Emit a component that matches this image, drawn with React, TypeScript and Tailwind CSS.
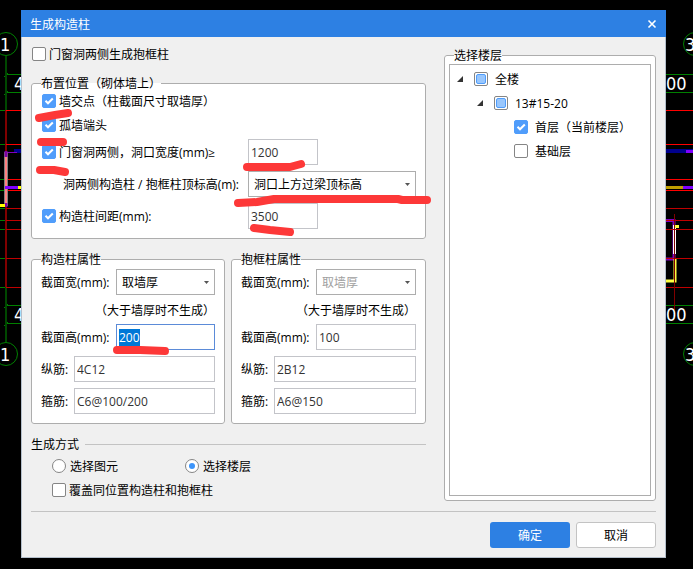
import React, { useEffect, useRef } from 'react';

const legendClass = 'h-[18px] leading-[20px]';
const groupClass = 'min-w-0 flex flex-col rounded-[3px] border border-[#adadad] bg-white';

type CheckProps = {
  label: string;
  checked?: boolean;
  partial?: boolean;
  wide?: boolean;
};

const Check: React.FC<CheckProps> = ({ label, checked, partial, wide }) => (
  <label className={`flex items-center h-[18px] ${wide ? 'gap-[7px]' : 'gap-[3px]'}`}>
    <span className="relative block size-[14px] shrink-0">
      <input
        type="checkbox"
        defaultChecked={checked}
        className="peer block size-[14px] appearance-none rounded-[2px] border border-[#858585] bg-white checked:border-[#509dfb] checked:bg-[#509dfb]"
      />
      <svg
        viewBox="0 0 14 14"
        className="pointer-events-none absolute inset-0 hidden size-[14px] peer-checked:block"
      >
        <path d="M3.5 6.8 L6 9.3 L10.8 4.5" fill="none" stroke="#fff" strokeWidth="2" />
      </svg>
      {partial && (
        <span className="pointer-events-none absolute inset-[2px] rounded-[2px] border border-[#509dfb] bg-[#99c7fd]" />
      )}
    </span>
    <span className="pt-[2px] leading-[18px] whitespace-nowrap">{label}</span>
  </label>
);

const Radio: React.FC<{ label: string; checked?: boolean }> = ({ label, checked }) => (
  <label className="flex h-[18px] w-[133px] items-center gap-1">
    <span className="relative block size-[14px] shrink-0">
      <input
        type="radio"
        name="mode"
        defaultChecked={checked}
        className="peer block size-[14px] appearance-none rounded-full border border-[#858585] bg-white"
      />
      <span className="pointer-events-none absolute inset-1 hidden rounded-full bg-[#3c94fa] peer-checked:block" />
    </span>
    <span className="pt-[2px] leading-[18px]">{label}</span>
  </label>
);

type TextBoxProps = {
  id: string;
  value: string;
  className: string;
  selected?: boolean;
};

const TextBox: React.FC<TextBoxProps> = ({ id, value, className, selected }) => {
  const ref = useRef<HTMLInputElement>(null);

  useEffect(() => {
    if (selected && ref.current) {
      ref.current.focus();
      ref.current.select();
    }
  }, [selected]);

  return (
    <input
      id={id}
      ref={ref}
      type="text"
      aria-label={id}
      defaultValue={value}
      className={`block h-[26px] min-w-0 border border-[#c3c4c9] bg-white px-[2px] leading-[18px] text-[#333] outline-none selection:bg-[#0078d7] selection:text-white focus:border-[#5b8bd8] ${className}`}
    />
  );
};

type ComboProps = {
  id: string;
  value: string;
  disabled?: boolean;
};

const Combo: React.FC<ComboProps> = ({ id, value, disabled }) => (
  <div className="relative min-w-0 flex-1">
    <select
      id={id}
      disabled={disabled}
      className="block h-[26px] w-full appearance-none border border-[#adadad] bg-white px-[5px] pt-[2px] leading-[18px] text-black opacity-100 outline-none disabled:text-[#a0a0a0]"
    >
      <option>{value}</option>
    </select>
    <svg viewBox="0 0 5 3" className="pointer-events-none absolute right-[6px] top-[12px] h-[3px] w-[5px]">
      <path d="M0 0 H5 L2.5 3 Z" fill="#555" />
    </svg>
  </div>
);

type ColumnGroupProps = {
  title: string;
  prefix: string;
  height: string;
  main: string;
  stirrup: string;
  disabled?: boolean;
  selected?: boolean;
};

const ColumnGroup: React.FC<ColumnGroupProps> = ({ title, prefix, height, main, stirrup, disabled, selected }) => (
  <fieldset className={`${groupClass} px-[9px] pt-px pb-[9px]`}>
    <legend className={legendClass}>{title}</legend>
    <div className="flex items-center">
      <label htmlFor={`${prefix}-width`} className="w-[75px] shrink-0 pt-[2px]">截面宽(mm):</label>
      <Combo id={`${prefix}-width`} value="取墙厚" disabled={disabled} />
    </div>
    <p className="flex h-[29px] items-center justify-end pt-[2px] whitespace-nowrap">（大于墙厚时不生成）</p>
    <div className="flex flex-col gap-[6px]">
      <div className="flex items-center">
        <label htmlFor={`${prefix}-height`} className="w-[75px] shrink-0 pt-[2px]">截面高(mm):</label>
        <TextBox id={`${prefix}-height`} value={height} selected={selected} className="flex-1" />
      </div>
      <div className="flex items-center">
        <label htmlFor={`${prefix}-main`} className="w-[33px] shrink-0 pt-[2px]">纵筋:</label>
        <TextBox id={`${prefix}-main`} value={main} className="flex-1" />
      </div>
      <div className="flex items-center">
        <label htmlFor={`${prefix}-stirrup`} className="w-[33px] shrink-0 pt-[2px]">箍筋:</label>
        <TextBox id={`${prefix}-stirrup`} value={stirrup} className="flex-1" />
      </div>
    </div>
  </fieldset>
);

const Expander: React.FC = () => (
  <button type="button" aria-label="展开" className="mr-[11px] block size-[6px] shrink-0">
    <svg viewBox="0 0 6 6" className="block size-[6px]">
      <path d="M6 0 V6 H0 Z" fill="#333" />
    </svg>
  </button>
);

const gridLines = [110, 144, 179, 190, 208, 220, 229, 258, 287];

const DrawingLeft: React.FC = () => (
  <svg viewBox="0 0 21 569" className="absolute left-0 top-0 h-[569px] w-[21px]">
    <g fill="none" stroke="#008000">
      <circle cx="6" cy="44" r="11.5" />
      <circle cx="6" cy="354" r="11.5" />
      <path d="M5 74.5 H21 M5 92.5 H21 M5 305.5 H21 M5 323.5 H21 M4 77 L8 73 M4 95 L8 91 M4 308 L8 304 M4 326 L8 322" />
      {gridLines.map((y) => (
        <path key={y} d={`M0 ${y + 0.5} H5`} />
      ))}
    </g>
    <path d="M6 56 V110 M6 287 V342" stroke="#004800" strokeWidth="2" />
    <path d="M6 110 V287" stroke="#800000" strokeWidth="2" />
    {gridLines.map((y) => (
      <path key={y} d={`M6 ${y + 0.5} H21`} stroke={y < 200 ? '#ff0000' : '#c00000'} />
    ))}
    <path d="M14 151 H21" stroke="#00008c" strokeWidth="4" />
    <path d="M5 152.5 H17" stroke="#8000c0" />
    <path d="M6 152 V206" stroke="#808080" strokeWidth="4" />
    <path d="M6 157 V203" stroke="#ff8080" strokeWidth="2" />
    <path d="M6 151 V157 M6 203 V207" stroke="#8000a0" strokeWidth="3" />
    <path d="M5 187.5 H18" stroke="#8000ff" strokeWidth="3" />
    <path d="M18 187.5 H21 M0 205.5 H5" stroke="#ffff00" strokeWidth="3" />
    <g fill="#fff" fontFamily="DejaVu Sans Condensed, DejaVu Sans" fontSize="18">
      <text x="0" y="51">1</text>
      <text x="0" y="361">1</text>
      <text x="14" y="90">4</text>
      <text x="14" y="321">4</text>
    </g>
  </svg>
);

const DrawingRight: React.FC = () => (
  <svg viewBox="666 0 27 569" className="absolute right-0 top-0 h-[569px] w-[27px]">
    <g fill="none" stroke="#008000">
      <circle cx="695" cy="44" r="11.5" />
      <circle cx="695" cy="354" r="11.5" />
      <path d="M666 74.5 H693 M666 92.5 H693 M666 305.5 H693 M666 323.5 H693" />
    </g>
    <path d="M666 151 H693" stroke="#00008c" strokeWidth="4" />
    <path d="M686 151.5 H693" stroke="#8000ff" strokeWidth="3" />
    <path d="M666 187.5 H683" stroke="#c0a000" strokeWidth="3" />
    <path d="M683 187.5 H693" stroke="#8000ff" strokeWidth="3" />
    <path d="M666 220.5 H674 V259 H666" fill="none" stroke="#8000c0" strokeWidth="3" />
    <path d="M674.5 225 V254" stroke="#fff" strokeWidth="3" />
    <path d="M675 259 V281 H666 M675 226.5 H679" fill="none" stroke="#ffff40" strokeWidth="3" />
    {gridLines.map((y) => (
      <path key={y} d={`M666 ${y + 0.5} H693`} stroke={y < 200 ? '#ff0000' : '#c00000'} />
    ))}
    <path d="M674.5 214 V310" stroke="#800000" />
    <g fill="#fff" fontFamily="DejaVu Sans Condensed, DejaVu Sans" fontSize="18">
      <text x="666" y="90">00</text>
      <text x="666" y="321">00</text>
      <text x="685" y="51">3</text>
      <text x="685" y="361">3</text>
    </g>
  </svg>
);

// hand-drawn red marks over the fields
const Marks: React.FC = () => (
  <svg
    viewBox="0 0 693 569"
    className="pointer-events-none absolute left-0 top-0 h-[569px] w-[693px]"
    fill="none"
    stroke="#fd3838"
    strokeWidth="8"
    strokeLinecap="round"
    strokeLinejoin="round"
  >
    <path d="M39 118 Q53 115 68 113" />
    <path d="M41 142 H63" />
    <path d="M40 170 L54 170 L65 172" />
    <path d="M247 167 H290 L301 164" />
    <path d="M238 203 L257 202 L274 199 H398 L402 200 H427" />
    <path d="M254 228 L270 230 L290 232" />
    <path d="M117 350 H140 L165 351" />
  </svg>
);

const App: React.FC = () => {
  return (
    <div className="relative min-h-screen overflow-hidden bg-black pt-[10px] pr-[27px] pb-[11px] pl-[21px] font-['Open_Sans','Noto_Sans_CJK_SC',sans-serif] text-xs text-black">
      <DrawingLeft />
      <DrawingRight />

      <main className="relative bg-[#f0f0f0]">
        <header className="flex h-[27px] items-center justify-between bg-[#2d80e3] pr-[9px] pl-[9px] text-white">
          <h1 className="pt-[2px]">生成构造柱</h1>
          <button type="button" aria-label="关闭" className="block size-[10px]">
            <svg viewBox="0 0 10 10" className="block size-[10px]">
              <path d="M1.5 1.5 L8.5 8.5 M8.5 1.5 L1.5 8.5" stroke="#fff" strokeWidth="1.6" />
            </svg>
          </button>
        </header>

        <form className="border border-t-0 border-[#b4bfcb] px-[9px] pt-2 pb-[9px]">
          <div className="flex gap-[18px]">
            <div className="min-w-0 flex-1 pb-[2px]">
              <div className="pl-px">
                <Check label="门窗洞两侧生成抱框柱" />
              </div>

              <fieldset className={`${groupClass} mt-[11px] px-[9px] pb-[9px]`}>
                <legend className={legendClass}>布置位置（砌体墙上）</legend>
                <div className="flex flex-col gap-[6px] pl-px">
                  <Check label="墙交点（柱截面尺寸取墙厚）" checked />
                  <Check label="孤墙端头" checked />
                </div>
                <div className="mt-[5px] flex flex-col gap-[6px]">
                  <div className="flex items-center">
                    <div className="w-[207px] shrink-0 pl-px">
                      <Check label="门窗洞两侧，洞口宽度(mm)≥" checked />
                    </div>
                    <TextBox id="opening-width" value="1200" className="w-[70px]" />
                  </div>
                  <div className="flex items-center">
                    <label htmlFor="top-level" className="w-[207px] shrink-0 pt-[2px] pl-[22px] whitespace-nowrap">
                      洞两侧构造柱 / 抱框柱顶标高(m):
                    </label>
                    <Combo id="top-level" value="洞口上方过梁顶标高" />
                  </div>
                  <div className="flex items-center">
                    <div className="w-[207px] shrink-0 pl-px">
                      <Check label="构造柱间距(mm):" checked />
                    </div>
                    <TextBox id="spacing" value="3500" className="w-[70px]" />
                  </div>
                </div>
              </fieldset>

              <div className="mt-[11px] grid grid-cols-[194fr_195fr] gap-[6px]">
                <ColumnGroup title="构造柱属性" prefix="gz" height="200" main="4C12" stirrup="C6@100/200" selected />
                <ColumnGroup title="抱框柱属性" prefix="bk" height="100" main="2B12" stirrup="A6@150" disabled />
              </div>

              <div className="mt-[11px] flex h-[18px] items-center gap-[6px]">
                <h2 className="pt-[2px]">生成方式</h2>
                <hr className="flex-1 border-[#c3c3c3]" />
              </div>
              <div className="mt-1 flex flex-col gap-[6px] pl-[21px]">
                <div className="flex">
                  <Radio label="选择图元" />
                  <Radio label="选择楼层" checked />
                </div>
                <Check label="覆盖同位置构造柱和抱框柱" />
              </div>
            </div>

            <fieldset className={`${groupClass} mt-px w-[212px] shrink-0 px-1 pb-1`}>
              <legend className={`${legendClass} ml-[5px]`}>选择楼层</legend>
              <ul className="h-full border border-[#adadad] pt-[2px]">
                <li className="flex h-6 items-center pl-[7px]">
                  <Expander />
                  <Check label="全楼" partial wide />
                </li>
                <li className="flex h-6 items-center pl-[27px]">
                  <Expander />
                  <Check label="13#15-20" partial wide />
                </li>
                <li className="flex h-6 items-center pl-[64px]">
                  <Check label="首层（当前楼层）" checked wide />
                </li>
                <li className="flex h-6 items-center pl-[64px]">
                  <Check label="基础层" wide />
                </li>
              </ul>
            </fieldset>
          </div>

          <hr className="mt-[10px] border-[#c3c3c3]" />

          <div className="mt-[10px] flex justify-end gap-[6px]">
            <button type="button" className="h-[26px] w-[80px] rounded-[3px] bg-[#2d80e3] pt-[2px] text-white">
              确定
            </button>
            <button type="button" className="h-[26px] w-[80px] rounded-[3px] border border-[#c3c3c3] bg-white pt-[2px]">
              取消
            </button>
          </div>
        </form>
      </main>

      <Marks />
    </div>
  );
};

export default App;
